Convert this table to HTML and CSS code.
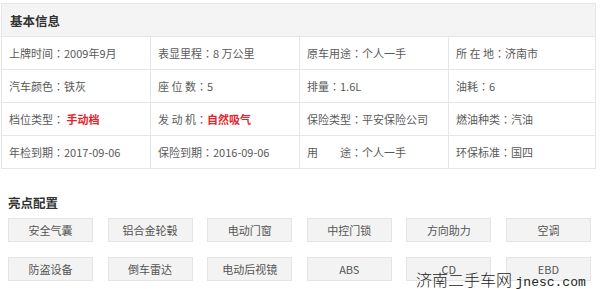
FILE: index.html
```html
<!DOCTYPE html>
<html lang="zh-CN">
<head>
<meta charset="utf-8">
<link rel="stylesheet" href="styles.css">
</head>
<body>
<div class="page">
  <section class="info">
    <div class="info-head">基本信息</div>
    <div class="info-grid">
      <div class="cell">上牌时间<span class="c" lang="ja">：</span>2009年9月</div>
      <div class="cell">表显里程<span class="c" lang="ja">：</span>8 万公里</div>
      <div class="cell">原车用途<span class="c" lang="ja">：</span>个人一手</div>
      <div class="cell">所 在 地<span class="c" lang="ja">：</span>济南市</div>
      <div class="cell">汽车颜色<span class="c" lang="ja">：</span>铁灰</div>
      <div class="cell">座 位 数<span class="c" lang="ja">：</span>5</div>
      <div class="cell">排量<span class="c" lang="ja">：</span>1.6L</div>
      <div class="cell">油耗<span class="c" lang="ja">：</span>6</div>
      <div class="cell">档位类型<span class="c" lang="ja">：</span> <span class="hl">手动档</span></div>
      <div class="cell">发 动 机<span class="c" lang="ja">：</span><span class="hl">自然吸气</span></div>
      <div class="cell">保险类型<span class="c" lang="ja">：</span>平安保险公司</div>
      <div class="cell">燃油种类<span class="c" lang="ja">：</span>汽油</div>
      <div class="cell">年检到期<span class="c" lang="ja">：</span>2017-09-06</div>
      <div class="cell">保险到期<span class="c" lang="ja">：</span>2016-09-06</div>
      <div class="cell">用　　途<span class="c" lang="ja">：</span>个人一手</div>
      <div class="cell">环保标准<span class="c" lang="ja">：</span>国四</div>
    </div>
  </section>
  <section class="highlights">
    <h3 class="hl-title">亮点配置</h3>
    <div class="tags">
      <div class="tag">安全气囊</div>
      <div class="tag">铝合金轮毂</div>
      <div class="tag">电动门窗</div>
      <div class="tag">中控门锁</div>
      <div class="tag">方向助力</div>
      <div class="tag">空调</div>
      <div class="tag">防盗设备</div>
      <div class="tag">倒车雷达</div>
      <div class="tag">电动后视镜</div>
      <div class="tag">ABS</div>
      <div class="tag">CD</div>
      <div class="tag">EBD</div>
    </div>
  </section>
  <div class="watermark">济南二手车网 <span class="wm-latin">jnesc.com</span></div>
</div>
</body>
</html>
```

FILE: styles.css
```css
* { box-sizing: border-box; }
html, body {
  margin: 0;
  padding: 0;
  background: #fff;
}
body {
  font-family: "Noto Sans CJK SC", "Noto Sans", sans-serif;
  color: #5a5a5a;
  width: 600px;
  height: 289px;
  overflow: hidden;
}
.page {
  position: relative;
  width: 600px;
  height: 289px;
  padding: 3px 0 0 1px;
}
.info {
  width: 595px;
  border: 1px solid #e6e6e6;
}
.info-head {
  height: 33px;
  background: #f4f4f4;
  border-bottom: 1px solid #e6e6e6;
  padding-left: 8px;
  font-size: 12.5px;
  font-weight: bold;
  color: #333;
  line-height: 33px;
}
.info-grid {
  display: grid;
  grid-template-columns: 149px 149px 149px 146px;
}
.cell {
  height: 33px;
  line-height: 32px;
  padding-left: 7px;
  font-size: 11px;
  border-bottom: 1px solid #e6e6e6;
  border-right: 1px solid #e6e6e6;
  white-space: nowrap;
}
.c {
  font-family: "Noto Sans CJK JP", "Noto Sans CJK SC", sans-serif;
}
.cell:nth-child(4n) { border-right: none; }
.cell:nth-last-child(-n+4) { border-bottom: none; height: 32px; }
.hl {
  color: #e5232a;
  font-weight: bold;
}
.highlights {
  padding: 0 0 0 7px;
}
.hl-title {
  margin: 25px 0 0 0;
  font-size: 12.5px;
  line-height: 18px;
  font-weight: bold;
  color: #333;
}
.tags {
  margin-top: 6px;
  display: grid;
  grid-template-columns: repeat(6, 85px);
  column-gap: 14.6px;
  row-gap: 15px;
}
.tag {
  height: 24px;
  line-height: 22px;
  text-align: center;
  font-size: 11px;
  background: #f3f3f3;
  border: 1px solid #e4e4e4;
  color: #555;
}
.watermark {
  position: absolute;
  left: 416px;
  top: 270px;
  font-size: 16px;
  line-height: 18px;
  color: #222;
  white-space: nowrap;
  font-weight: 300;
}
.wm-latin {
  font-family: "Liberation Mono", monospace;
  font-size: 13px;
}
```
